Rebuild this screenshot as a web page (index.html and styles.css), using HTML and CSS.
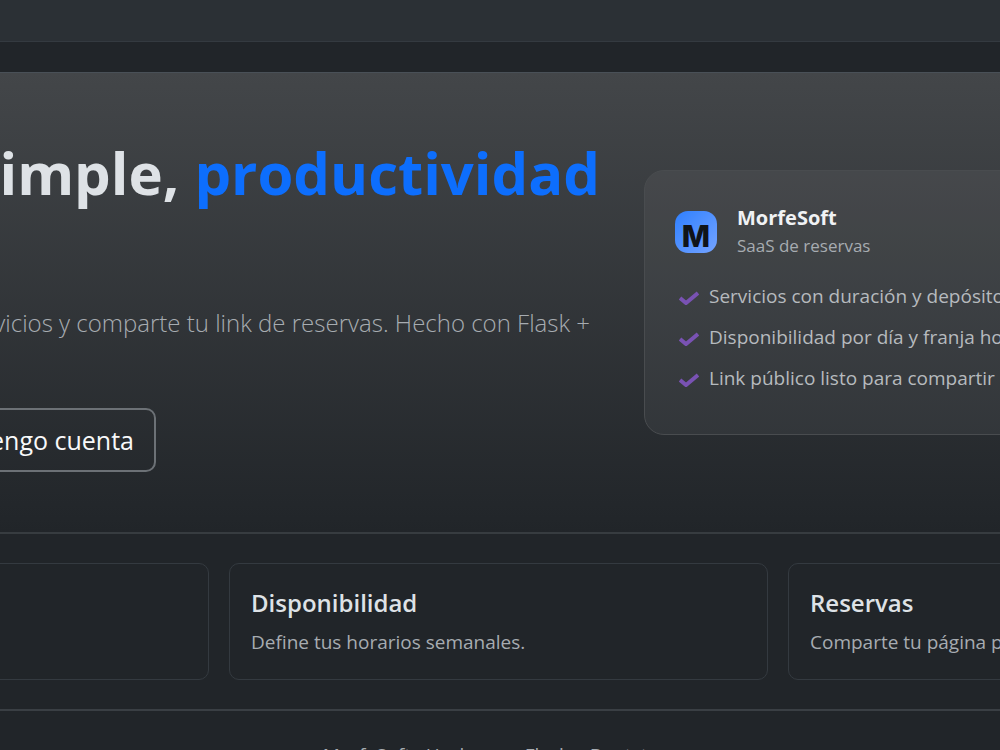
FILE: index.html
```html
<!DOCTYPE html>
<html lang="es">

<head>
    <meta charset="UTF-8">
    <title>MorfeSoft</title>
    <link rel="stylesheet" href="styles.css">
</head>

<body>
    <header class="navbar"></header>

    <section class="hero">
        <div class="hero-text">
            <h1>simple, <span class="primary">productividad</span></h1>
            <p class="lead">servicios y comparte tu link de reservas. Hecho con Flask +</p>
            <div class="actions">
                <button class="btn" type="button">Ya tengo cuenta</button>
            </div>
        </div>

        <aside class="glass">
            <div class="brand">
                <svg class="logo" viewBox="0 0 42 42" aria-hidden="true">
                    <defs>
                        <linearGradient id="blue" x1="0" y1="0" x2="1" y2="1">
                            <stop offset="0" stop-color="#2f80ff" />
                            <stop offset="1" stop-color="#74a3ff" />
                        </linearGradient>
                    </defs>
                    <rect width="42" height="42" rx="13" fill="url(#blue)" />
                    <text x="21" y="36" text-anchor="middle">M</text>
                </svg>
                <div>
                    <div class="brand-name">MorfeSoft</div>
                    <div class="brand-sub">SaaS de reservas</div>
                </div>
            </div>
            <ul class="checks">
                <li><svg viewBox="0 0 20 16"><path d="M1 9l6 5L19 4" /></svg>Servicios con duración y depósito</li>
                <li><svg viewBox="0 0 20 16"><path d="M1 9l6 5L19 4" /></svg>Disponibilidad por día y franja horaria</li>
                <li><svg viewBox="0 0 20 16"><path d="M1 9l6 5L19 4" /></svg>Link público listo para compartir</li>
            </ul>
        </aside>
    </section>

    <section class="cards">
        <article class="card"></article>
        <article class="card">
            <h2>Disponibilidad</h2>
            <p>Define tus horarios semanales.</p>
        </article>
        <article class="card">
            <h2>Reservas</h2>
            <p>Comparte tu página pública.</p>
        </article>
    </section>

    <footer>MorfeSoft · Hecho con Flask + Bootstrap</footer>
</body>

</html>
```
FILE: styles.css
```css
* {
    box-sizing: border-box;
}

body {
    margin: 0;
    height: 100vh;
    overflow: hidden;
    background-color: #212529;
    color: #dee2e6;
    font-family: "Open Sans", "Noto Sans", sans-serif;
    font-size: 19px;
}

h1, h2, p, ul {
    margin: 0;
    padding: 0;
}

.navbar {
    height: 42px;
    background-color: #2b3035;
    border-bottom: 1px solid #343a40;
}

/* the hero and the cards bleed past both sides of the window */
.hero {
    display: grid;
    grid-template-columns: 600px 1fr;
    gap: 44px;
    align-items: center;
    height: 462px;
    margin-top: 30px;
    margin-right: -300px;
    border-top: 1px solid #495057;
    border-bottom: 2px solid #373c40;
    background-image: linear-gradient(#434649, #212529);
}

.hero-text {
    display: flex;
    flex-direction: column;
    align-items: flex-end;
    padding-top: 4px;
    white-space: nowrap;
}

h1 {
    font-size: 58px;
    line-height: 72px;
    font-weight: bold;
}

.primary {
    color: #0d6efd;
}

.lead {
    margin-top: 96px;
    padding-right: 10px;
    font-size: 24px;
    line-height: 36px;
    font-weight: 300;
    color: #a7acb1;
}

.actions {
    display: flex;
    justify-content: flex-end;
    width: 156px;
    margin-top: 67px;
    align-self: flex-start;
}

.btn {
    flex: none;
    padding: 12px 20px;
    border: 2px solid #6c7176;
    border-radius: 10px;
    background: none;
    color: #f8f9fa;
    font-family: inherit;
    font-size: 25px;
    line-height: 36px;
}

.glass {
    height: 265px;
    padding: 33px 30px;
    border: 1px solid #494c4f;
    border-radius: 20px;
    background-color: rgba(255, 255, 255, 0.05);
}

.brand {
    display: flex;
    align-items: center;
    gap: 20px;
    line-height: 28px;
}

.logo {
    width: 42px;
    height: 42px;
}

.logo text {
    font-family: Inter, sans-serif;
    font-size: 30px;
    font-weight: 800;
    fill: #101418;
}

.brand-name {
    font-size: 20px;
    font-weight: bold;
    color: #f0f2f4;
}

.brand-sub {
    font-size: 17px;
    color: #a7acb1;
}

.checks {
    margin-top: 16px;
    list-style: none;
    line-height: 41px;
    color: #b6babe;
}

.checks li {
    display: flex;
    align-items: center;
    gap: 10px;
    white-space: nowrap;
}

.checks svg {
    width: 20px;
    height: 16px;
    margin-left: 4px;
    fill: none;
    stroke: #7952b3;
    stroke-width: 4;
}

.cards {
    display: grid;
    grid-template-columns: repeat(3, 1fr);
    gap: 20px;
    margin: 29px -327px 29px -330px;
}

.card {
    height: 117px;
    padding: 22px 21px;
    border: 1px solid #343a40;
    border-radius: 10px;
}

.card h2 {
    font-size: 24px;
    line-height: 34px;
    font-weight: 600;
}

.card p {
    margin-top: 6px;
    line-height: 32px;
    color: #a7acb1;
}

footer {
    padding-top: 30px;
    border-top: 2px solid #3a3f44;
    text-align: center;
    line-height: 28px;
    color: #a7acb1;
}
```
